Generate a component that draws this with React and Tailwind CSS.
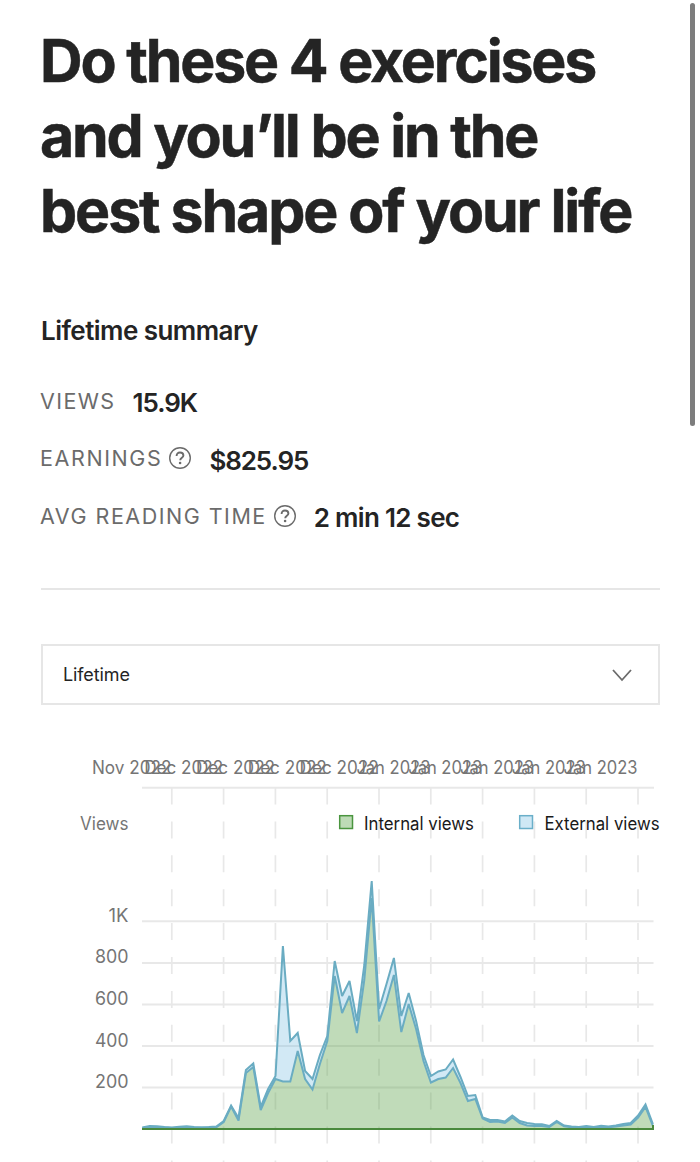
import React from "react";

const STEP = 7.4;
const ORIGIN = 142.3;
const BASE = 1129;
const TOP = 740;

const total = [
  1127.5, 1126, 1126.3, 1127, 1127.5, 1126.7, 1126.2, 1126.9, 1127.3, 1127, 1126.5, 1121, 1105.5, 1118,
  1070, 1063.5, 1107, 1089, 1076, 946, 1041, 1033, 1071, 1079, 1055, 1036, 961, 996, 981, 1021, 965, 881,
  1009, 984, 958, 1016, 993, 1021, 1055, 1076, 1071.5, 1069.5, 1059.5, 1077, 1096, 1095, 1117.5, 1120,
  1120, 1121.5, 1115.5, 1121, 1123, 1124, 1124.3, 1126, 1121, 1125.5, 1126.5, 1127, 1126, 1127, 1125.7,
  1126.5, 1125.5, 1124, 1123, 1115.5, 1104.5, 1124,
];

const internal = [
  1128, 1127, 1127.2, 1127.6, 1128, 1127.4, 1127, 1127.6, 1128, 1127.6, 1127.2, 1122, 1106.5, 1120.5,
  1073, 1067, 1110, 1093, 1079, 1081.5, 1081.5, 1051, 1079, 1089.5, 1064, 1041, 976, 1013, 996, 1033, 980,
  898, 1021.5, 1001, 975, 1032, 1004, 1029, 1061, 1082.5, 1079, 1077.5, 1068, 1083, 1101, 1099, 1118.5,
  1122, 1121.5, 1123, 1117.5, 1123, 1125.5, 1126, 1126, 1127, 1122, 1126.3, 1127.2, 1127.6, 1127, 1127.6,
  1126.8, 1127.2, 1126.5, 1125.4, 1124.6, 1117.5, 1107, 1126,
];

const toPoints = (series) =>
  series.map((y, i) => `${(ORIGIN + i * STEP).toFixed(1)},${y - TOP}`);

const totalPoints = toPoints(total);
const internalPoints = toPoints(internal);
const base = BASE - TOP;
const externalArea = [...totalPoints, ...[...internalPoints].reverse()].join(" ");
const internalArea = [`142.3,${base}`, ...internalPoints, `653,${base}`].join(" ");

const months = ["Nov 2022", "Dec 2022", "Dec 2022", "Dec 2022", "Dec 2022", "Jan 2023", "Jan 2023", "Jan 2023", "Jan 2023", "Jan 2023"];
const rows = [
  ["1K", 921],
  ["800", 962.7],
  ["600", 1004.2],
  ["400", 1045.8],
  ["200", 1087.3],
];

function HelpIcon() {
  return (
    <svg className="ml-1.5 size-6 shrink-0 -translate-y-px" viewBox="0 0 24 24" fill="none" stroke="#6b6b6b">
      <circle cx="12" cy="12" r="10.3" strokeWidth="1.4" />
      <path d="M8.6 9.9c0-2.2 1.4-3.4 3.4-3.4s3.4 1.2 3.4 2.9c0 2.3-3.2 2.4-3.2 4.9" strokeWidth="1.9" />
      <circle cx="12.1" cy="17" r="1.3" fill="#6b6b6b" stroke="none" />
    </svg>
  );
}

function Chart() {
  return (
    <svg className="block h-[422px] w-[700px]" viewBox="0 0 700 422" fontFamily="Inter, 'Liberation Sans', sans-serif" fontSize="18">
      <g fill="#757575">
        {months.map((label, i) => (
          <text key={i} x={171.4 + i * 51.8} y="34" textAnchor="end" textLength={i === 0 ? 79.5 : i < 5 ? 79 : 74} lengthAdjust="spacingAndGlyphs">
            {label}
          </text>
        ))}
        <text x="80" y="90" textLength="48.5" lengthAdjust="spacingAndGlyphs">Views</text>
        {rows.map(([label, y]) => (
          <text key={label} x="128.5" y={y - TOP + 0.7} textAnchor="end" textLength={label === "1K" ? 20 : 33.5} lengthAdjust="spacingAndGlyphs">
            {label}
          </text>
        ))}
      </g>
      <g stroke="#e8e8e8" strokeWidth="2">
        <line x1="142" x2="654" y1="47.8" y2="47.8" />
        {rows.map(([label, y]) => (
          <line key={label} x1="142" x2="653.5" y1={y - TOP + 0.2} y2={y - TOP + 0.2} />
        ))}
        {months.map((_, i) => (
          <line key={i} x1={171.8 + i * 51.8} x2={171.8 + i * 51.8} y1="47.5" y2="422" strokeDasharray="17 16.9" strokeWidth="1.7" />
        ))}
      </g>
      <polygon points={externalArea} fill="#6bb5de" fillOpacity="0.3" />
      <polygon points={internalArea} fill="#5aa046" fillOpacity="0.38" />
      <g fill="none" stroke="#6aacc2" strokeWidth="2" strokeMiterlimit="3">
        <polyline points={internalPoints.join(" ")} />
        <polyline points={totalPoints.join(" ")} />
      </g>
      <path d="M142 389H653V385" fill="none" stroke="#4a8a3d" strokeWidth="2" />
      <g strokeWidth="1.5">
        <rect x="339.7" y="75.7" width="12.8" height="12.8" fill="#bddbb6" stroke="#4a953f" />
        <rect x="519.7" y="75.7" width="12.8" height="12.8" fill="#cfe8f5" stroke="#6aafc9" />
      </g>
      <g fill="#191919">
        <text x="364" y="90" textLength="110" lengthAdjust="spacingAndGlyphs">Internal views</text>
        <text x="544.5" y="90" textLength="115" lengthAdjust="spacingAndGlyphs">External views</text>
      </g>
    </svg>
  );
}

export default function App() {
  return (
    <div className="relative flex h-[1162px] w-[700px] flex-col overflow-hidden bg-white font-[Inter,'Liberation_Sans',sans-serif] text-[#242424]">
      <div className="absolute top-[3px] right-[5px] h-[423px] w-[5px] rounded-full bg-[#7d7d7d]" />
      <h1 className="ml-10 h-[284px] pt-[23px] text-[59px] leading-[75px] font-bold whitespace-nowrap [-webkit-text-stroke:0.5px_#242424]">
        <span className="block tracking-[-2.2px]">Do these 4 exercises</span>
        <span className="block tracking-[-2.2px]">and you’ll be in the</span>
        <span className="block tracking-[-2.1px]">best shape of your life</span>
      </h1>
      <h2 className="ml-[41px] h-[88px] pt-8 text-[26px] leading-[30px] font-semibold tracking-[-0.55px]">Lifetime summary</h2>
      <div className="ml-10 flex h-[58px] items-center">
        <span className="text-[21.5px] tracking-[1.4px] text-[#6b6b6b]">VIEWS</span>
        <span className="ml-[17px] pt-[2px] text-[26px] font-semibold tracking-[-1px]">15.9K</span>
      </div>
      <div className="ml-10 flex h-[57px] items-center">
        <span className="text-[21.5px] tracking-[1.6px] text-[#6b6b6b]">EARNINGS</span>
        <HelpIcon />
        <span className="ml-[17px] pt-[3px] text-[26px] font-semibold tracking-[-1.1px]">$825.95</span>
      </div>
      <div className="ml-10 flex h-[59px] items-center">
        <span className="text-[21.5px] tracking-[1.5px] text-[#6b6b6b]">AVG READING TIME</span>
        <HelpIcon />
        <span className="ml-[17px] pt-[2px] text-[26px] font-semibold tracking-[-0.7px]">2 min 12 sec</span>
      </div>
      <div className="mt-[42px] ml-[41px] h-0.5 w-[619px] bg-[#e6e6e6]" />
      <button className="mt-[54px] ml-[41px] flex h-[61px] w-[619px] shrink-0 items-center justify-between border-2 border-[#e6e6e6] pr-6 pl-5 text-left text-[18px]">
        <span className="tracking-[-0.1px]">Lifetime</span>
        <svg className="h-6 w-6" viewBox="0 0 24 24" fill="none" stroke="#6b6b6b" strokeWidth="1.8">
          <path d="M3 7l9 10 9-10" />
        </svg>
      </button>
      <div className="mt-[35px]">
        <Chart />
      </div>
    </div>
  );
}
